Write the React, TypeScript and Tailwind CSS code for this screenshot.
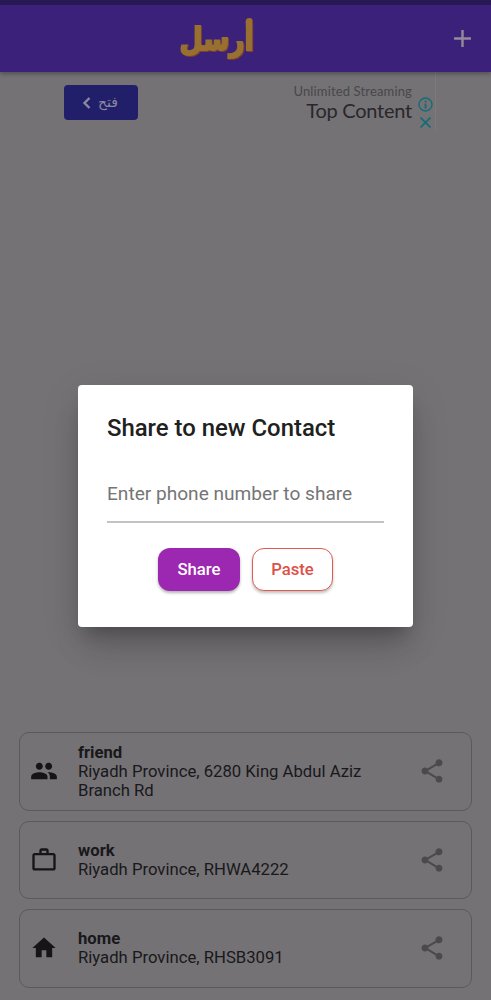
import type { ComponentType } from 'react';
import { MdAdd, MdHome, MdPeople, MdShare, MdWorkOutline } from 'react-icons/md';

type Place = {
  label: string;
  address: string;
  icon: ComponentType<{ className?: string }>;
};

const places: Place[] = [
  { label: 'friend', address: 'Riyadh Province, 6280 King Abdul Aziz Branch Rd', icon: MdPeople },
  { label: 'work', address: 'Riyadh Province, RHWA4222', icon: MdWorkOutline },
  { label: 'home', address: 'Riyadh Province, RHSB3091', icon: MdHome },
];

function Header() {
  return (
    <header className="relative z-10 shadow-[0_2px_4px_rgba(0,0,0,0.3)]">
      <div className="h-[5px] bg-[#281853]" />
      <div className="flex h-[67px] items-center justify-between bg-[#3b2179] pl-[177px] pr-[14px]">
        <svg width="80" height="60" viewBox="0 0 80 60" className="overflow-visible">
          <text
            x="39.5"
            y="41"
            textAnchor="middle"
            textLength="74"
            lengthAdjust="spacingAndGlyphs"
            direction="rtl"
            strokeWidth="2"
            className="fill-[#98702f] stroke-[#98702f] font-['DejaVu_Sans',sans-serif] text-[31px] font-bold drop-shadow-[1px_1px_0_#7b3f35]"
          >
            أرسل
          </text>
        </svg>
        <MdAdd className="size-[29px] text-[#918b9b]" />
      </div>
    </header>
  );
}

function AdBanner() {
  return (
    <div className="mx-auto flex h-[59px] w-[381px] justify-between border-r border-[#7c7a7d] pl-[9px] pr-[2px]">
      <button className="mt-[13px] flex h-[35px] w-[74px] items-center justify-center gap-[7px] rounded bg-[#211f69] pr-0.5 text-[#8b899f]">
        <svg width="9" height="12" viewBox="0 0 9 12" fill="none" stroke="currentColor" strokeWidth="2.4">
          <path d="M7.5 1 2.5 6l5 5" />
        </svg>
        <span className="font-['DejaVu_Sans',sans-serif] text-[14px]">فتح</span>
      </button>
      <div className="flex gap-[6px]">
        <div className="flex flex-col items-end pt-[11px] font-[Lato,sans-serif]">
          <span className="text-[13px] leading-4 tracking-[0.15px] text-[#49474a]">Unlimited Streaming</span>
          <span className="text-[20px] leading-[22px] tracking-[-0.25px] text-[#29272b]">Top Content</span>
        </div>
        <div className="flex flex-col items-center gap-[5px] pt-[25px] text-[#126d78]">
          <svg width="15" height="15" viewBox="0 0 15 15" fill="none" stroke="currentColor" strokeWidth="1.4">
            <circle cx="7.5" cy="7.5" r="6.5" />
            <path d="M7.5 6.5v5M7.5 3.5v1.7" strokeWidth="1.8" />
          </svg>
          <svg width="11" height="11" viewBox="0 0 11 11" stroke="currentColor" strokeWidth="1.7">
            <path d="M.5.5l10 10M10.5.5l-10 10" />
          </svg>
        </div>
      </div>
    </div>
  );
}

function PlaceCard({ label, address, icon: Icon }: Place) {
  return (
    <li className="flex h-[78.5px] items-center rounded-[10px] border border-[#5b595c] pl-[10px] pr-[25px]">
      <Icon className="size-7 shrink-0 text-[#151417]" />
      <div className="ml-5 w-[300px] text-[16.7px] leading-[19px] text-[#19181b]">
        <p className="font-bold">{label}</p>
        <p>{address}</p>
      </div>
      <MdShare className="ml-auto size-7 shrink-0 text-[#4b494c]" />
    </li>
  );
}

function ShareDialog() {
  return (
    <div className="absolute left-[78px] top-[385px] flex h-[242px] w-[335px] flex-col rounded-[4px] bg-white px-[29px] shadow-[0_12px_15px_-7px_rgba(0,0,0,0.2),0_26px_30px_-6px_rgba(0,0,0,0.14),0_10px_40px_0_rgba(0,0,0,0.1)]">
      <h2 className="mt-7 text-[23.9px] font-medium leading-[30px] text-[#202020]">Share to new Contact</h2>
      <input
        className="mt-[22px] h-[58px] w-full border-b-2 border-[#c3c3c3] text-[19.1px] outline-none placeholder:text-[#757575]"
        placeholder="Enter phone number to share"
      />
      <div className="mt-[25px] flex justify-center gap-3 text-[16.7px] font-medium">
        <button className="h-[43px] w-[82px] rounded-xl bg-[#9c27b0] pt-px text-white shadow-[0_2px_3px_rgba(0,0,0,0.3)]">
          Share
        </button>
        <button className="h-[43px] w-[81px] rounded-xl border border-[#e35b50] bg-white pt-px text-[#dc5147] shadow-[0_2px_3px_rgba(0,0,0,0.25)]">
          Paste
        </button>
      </div>
    </div>
  );
}

export default function App() {
  return (
    <div className="relative flex h-[1000px] w-[491px] flex-col overflow-hidden bg-[#747275] font-[Roboto,sans-serif]">
      <Header />
      <AdBanner />
      <ul className="mx-[19px] mb-[12.5px] mt-auto flex flex-col gap-[10px]">
        {places.map((place) => (
          <PlaceCard key={place.label} {...place} />
        ))}
      </ul>
      <ShareDialog />
    </div>
  );
}
